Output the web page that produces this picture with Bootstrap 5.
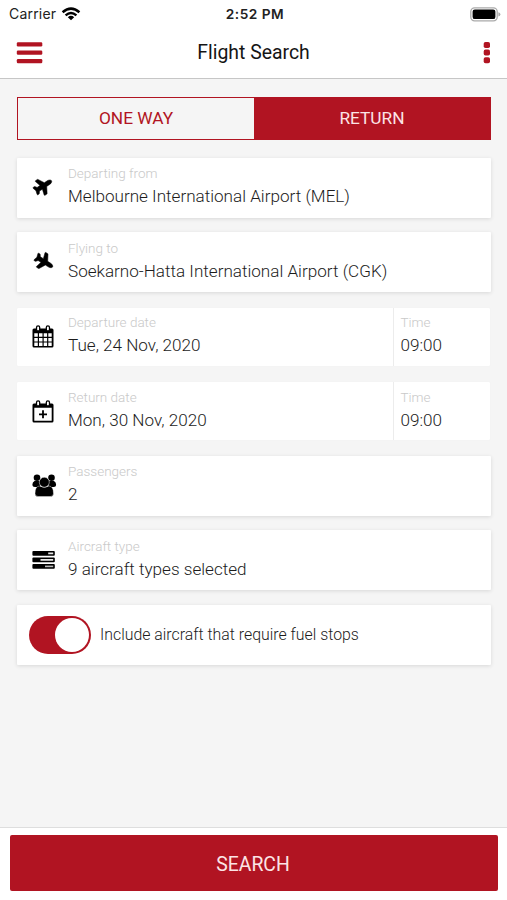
<!DOCTYPE html>
<html lang="en">
<head>
<meta charset="utf-8">
<meta name="viewport" content="width=device-width, initial-scale=1">
<title>Flight Search</title>
<link href="https://cdn.jsdelivr.net/npm/bootstrap@5.3.0/dist/css/bootstrap.min.css" rel="stylesheet">
<style>
  :root { --brand: #b11422; }
  body { font-family: Roboto, "Liberation Sans", sans-serif; background: #f5f5f5; color: #222; }
  .screen { height: 900px; overflow: hidden; }
  .status-bar { height: 28px; padding: 0 6px 0 9px; font-family: Inter, Roboto, sans-serif; font-size: 14px; line-height: 28px; color: #222; }
  .status-bar > * { flex: 1 1 0; }
  .carrier { letter-spacing: .2px; }
  .clock { font-weight: 600; font-size: 13.7px; letter-spacing: .5px; }
  .title-bar { height: 51px; padding: 0 16px; border-bottom: 1px solid #c6c6c6; }
  .title-bar > * { flex: 1 1 0; }
  .title-bar h1 { flex: none; font-size: 19.4px; font-weight: 400; line-height: 24px; color: #151515; }
  .title-bar svg { display: block; }
  .content { padding: 18px 16px 0 17px; }
  .trip { height: 43px; margin-bottom: 17.5px; border: 1px solid #b11422; }
  .trip .btn { --bs-btn-padding-y: 0; --bs-btn-font-size: 17.3px; --bs-btn-color: var(--brand); --bs-btn-active-bg: var(--brand); --bs-btn-active-color: #fce4e6; border: 0; border-radius: 0; outline: 0; transition: none; flex: 1 1 0; }
  .fields { gap: 14.6px; }
  .field { height: 60px; background: #fff; border-radius: 1px; box-shadow: 0 1px 4px rgba(0,0,0,.12); }
  .field.flat { height: 58px; margin: 1.2px 1px .8px 0; box-shadow: 0 0 1px rgba(0,0,0,.07); }
  .glyph { width: 51px; padding-left: 15px; flex: none; }
  .glyph svg { display: block; overflow: visible; }
  .copy { padding-top: 6.5px; }
  .flat .copy { padding-top: 5.3px; }
  .hint { font-size: 13.5px; line-height: 18px; font-weight: 300; color: #c9c9c9; }
  .value { font-size: 17.1px; line-height: 22px; font-weight: 300; margin-top: 3px; color: #1c1c1c; white-space: nowrap; }
  .time { width: 97px; padding-left: 6.5px; border-left: 1px solid #ececec; }
  .switch { width: 62.5px; height: 38px; border-radius: 19px; background: var(--brand); padding: 2px; margin-left: 11.5px; }
  .knob { width: 34px; height: 34px; border-radius: 50%; background: #fff; }
  .switch-text { font-size: 15.87px; font-weight: 300; margin-left: 9px; color: #1c1c1c; }
  .footer { height: 73px; background: #fff; border-top: 1px solid #dedede; padding: 7px 9px 9px 10px; }
  .footer .btn { background: var(--brand); color: #fce4e6; border: 0; border-radius: 2px; font-size: 19.4px; height: 56px; padding: 3px 2px 0 0; transition: none; }
</style>
</head>
<body>
<div class="screen d-flex flex-column">
  <div class="status-bar bg-white d-flex align-items-center flex-shrink-0">
    <div class="d-flex align-items-center"><span class="carrier">Carrier</span>
      <svg style="margin-left:5px" width="20" height="14" viewBox="0 0 20 14" fill="none" stroke="#000" stroke-width="2.500"><path d="M1.600 5.200Q10-2 18.400 5.200M4.600 8.400Q10 3.700 15.400 8.400"/><path d="M10 13.200 6.800 10.200Q10 7.500 13.200 10.200Z" fill="#000" stroke="none"/></svg>
    </div>
    <div class="clock text-center">2:52 PM</div>
    <div class="d-flex justify-content-end">
      <svg width="31" height="15" viewBox="0 0 31 15"><rect x=".8" y=".8" width="26.400" height="13" rx="3.800" fill="#fff" stroke="#aaa" stroke-width="1.300"/><rect x="2.600" y="2.500" width="22.800" height="9.600" rx="2.200"/><path d="M28.400 5.200q2 .6 2 2.200t-2 2.200z" fill="#aaa"/></svg>
    </div>
  </div>
  <header class="title-bar bg-white d-flex align-items-center flex-shrink-0">
    <div><svg width="27" height="22" viewBox="0 0 27 22" fill="#b11422"><rect x=".8" y=".2" width="25.500" height="4.200" rx="1.200"/><rect x=".8" y="8.600" width="25.500" height="4.200" rx="1.200"/><rect x=".8" y="17" width="25.500" height="4.200" rx="1.200"/></svg></div>
    <h1 class="m-0">Flight Search</h1>
    <div class="d-flex justify-content-end"><svg width="8" height="22" viewBox="0 0 8 22" fill="#b11422"><rect x=".7" y="0" width="6.300" height="6" rx="1.800"/><rect x=".7" y="7.600" width="6.300" height="6" rx="1.800"/><rect x=".7" y="15.200" width="6.300" height="6" rx="1.800"/></svg></div>
  </header>
  <main class="content flex-grow-1">
    <div class="trip d-flex">
      <button class="btn" type="button">ONE WAY</button>
      <button class="btn active" type="button">RETURN</button>
    </div>
    <div class="fields d-flex flex-column">
      <div class="field d-flex">
        <div class="glyph d-flex align-items-center"><svg width="22" height="20" viewBox="0 0 22 20"><path stroke="#000" stroke-width="14" transform="translate(11.300 8) rotate(-33) scale(.034) translate(-288 -256)" d="M480 192H365.700L260.600 8A16 16 0 0 0 246.700 0h-65.500c-10.600 0-18.300 10.200-15.400 20.400L214.900 192H112l-43.200-57.600c-3-4-7.800-6.400-12.800-6.400H16C5.600 128-2 137.800.5 147.900L32 256 .5 364.100C-2 374.200 5.600 384 16 384h40c5 0 9.800-2.400 12.800-6.400L112 320h102.900l-49.100 171.600c-2.900 10.200 4.800 20.400 15.400 20.400h65.500c5.700 0 11-3.100 13.900-8.100L365.700 320H480c35.300 0 96-28.600 96-64s-60.700-64-96-64z"/></svg></div>
        <div class="copy"><div class="hint">Departing from</div><div class="value">Melbourne International Airport (MEL)</div></div>
      </div>
      <div class="field d-flex">
        <div class="glyph d-flex align-items-center"><svg width="22" height="20" viewBox="0 0 22 20"><path stroke="#000" stroke-width="14" transform="translate(12.300 9.800) rotate(32) scale(.034) translate(-288 -256)" d="M480 192H365.700L260.600 8A16 16 0 0 0 246.700 0h-65.500c-10.600 0-18.300 10.200-15.400 20.400L214.900 192H112l-43.200-57.600c-3-4-7.800-6.400-12.800-6.400H16C5.600 128-2 137.800.5 147.900L32 256 .5 364.100C-2 374.200 5.600 384 16 384h40c5 0 9.800-2.400 12.800-6.400L112 320h102.900l-49.100 171.600c-2.900 10.200 4.800 20.400 15.400 20.400h65.500c5.700 0 11-3.100 13.900-8.100L365.700 320H480c35.300 0 96-28.600 96-64s-60.700-64-96-64z"/></svg></div>
        <div class="copy"><div class="hint">Flying to</div><div class="value">Soekarno-Hatta International Airport (CGK)</div></div>
      </div>
      <div class="field flat d-flex">
        <div class="glyph d-flex align-items-center"><svg width="22" height="23" viewBox="0 0 22 23"><path d="M2 3.500H20a1.500 1.500 0 0 1 1.500 1.500V21a1.500 1.500 0 0 1-1.500 1.500H2A1.500 1.500 0 0 1 .5 21V5A1.500 1.500 0 0 1 2 3.500Z"/><path fill="#fff" d="M2.300 8.300h3.500v3.500H2.300zM7 8.300h3.500v3.500H7zM11.700 8.300h3.400v3.500h-3.400zM16.300 8.300h3.400v3.500h-3.400zM2.300 13h3.500v3.400H2.300zM7 13h3.500v3.400H7zM11.700 13h3.400v3.400h-3.400zM16.300 13h3.400v3.400h-3.400zM2.300 17.600h3.500V21H2.300zM7 17.600h3.500V21H7zM11.700 17.600h3.400V21h-3.400zM16.300 17.600h3.400V21h-3.400z"/><g fill="#fff" stroke="#000" stroke-width="1.300"><rect x="4.500" y=".8" width="3.200" height="5.200" rx="1.600"/><rect x="14.300" y=".8" width="3.200" height="5.200" rx="1.600"/></g></svg></div>
        <div class="copy flex-grow-1"><div class="hint">Departure date</div><div class="value">Tue, 24 Nov, 2020</div></div>
        <div class="copy time"><div class="hint">Time</div><div class="value">09:00</div></div>
      </div>
      <div class="field flat d-flex">
        <div class="glyph d-flex align-items-center"><svg width="22" height="23" viewBox="0 0 22 23"><path fill-rule="evenodd" d="M2 3.500H20a1.500 1.500 0 0 1 1.500 1.500V21a1.500 1.500 0 0 1-1.500 1.500H2A1.500 1.500 0 0 1 .5 21V5A1.500 1.500 0 0 1 2 3.500ZM2.300 7.800V20.700H19.700V7.800Z"/><path d="M11 10.300v8M7 14.300h8" stroke="#000" stroke-width="1.800"/><g fill="#fff" stroke="#000" stroke-width="1.300"><rect x="4.500" y=".8" width="3.200" height="5.200" rx="1.600"/><rect x="14.300" y=".8" width="3.200" height="5.200" rx="1.600"/></g></svg></div>
        <div class="copy flex-grow-1"><div class="hint">Return date</div><div class="value">Mon, 30 Nov, 2020</div></div>
        <div class="copy time"><div class="hint">Time</div><div class="value">09:00</div></div>
      </div>
      <div class="field d-flex">
        <div class="glyph d-flex align-items-center"><svg width="25" height="23" viewBox="0 0 25 23"><circle cx="5" cy="3.700" r="3.300"/><circle cx="19.500" cy="3.700" r="3.300"/><path d="M2.500 7H8v6H3Q.4 13 .4 10.500T2.500 7zM22 7h-5.500v6H21.500q2.600 0 2.600-2.500T22 7z"/><path d="M7.500 12q4.700 2.600 9.500 0 4.500.3 4.500 7.400 0 3.200-3.500 3.200H6.500Q3 22.600 3 19.400 3 12.300 7.500 12z" stroke="#fff" stroke-width=".4"/><circle cx="12.300" cy="8.200" r="5" stroke="#fff" stroke-width=".5"/></svg></div>
        <div class="copy"><div class="hint">Passengers</div><div class="value">2</div></div>
      </div>
      <div class="field d-flex">
        <div class="glyph d-flex align-items-center"><svg width="23" height="18" viewBox="0 0 23 18"><rect x=".4" y="0" width="22.400" height="4.800" rx="1"/><rect x=".4" y="6.500" width="22.400" height="4.800" rx="1"/><rect x=".4" y="13" width="22.400" height="4.800" rx="1"/><path d="M16.200 1.600h5v1.600h-5zM8.500 8.100h12.700v1.600H8.500z" fill="#e8e8e8"/><path d="M13 14.600h8.200v1.600H13z" fill="#bbb"/></svg></div>
        <div class="copy"><div class="hint">Aircraft type</div><div class="value">9 aircraft types selected</div></div>
      </div>
      <div class="field d-flex align-items-center">
        <div class="switch d-flex justify-content-end" role="switch" aria-checked="true"><div class="knob"></div></div>
        <div class="switch-text">Include aircraft that require fuel stops</div>
      </div>
    </div>
  </main>
  <footer class="footer flex-shrink-0"><button class="btn w-100" type="button">SEARCH</button></footer>
</div>
<script src="https://cdn.jsdelivr.net/npm/bootstrap@5.3.0/dist/js/bootstrap.bundle.min.js"></script>
</body>
</html>
